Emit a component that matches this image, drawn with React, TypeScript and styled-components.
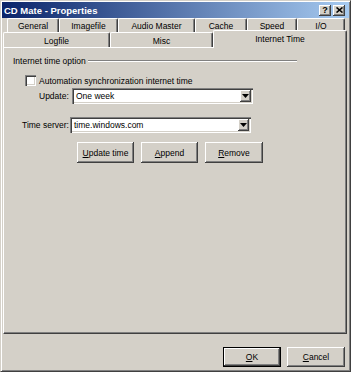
import { FC } from 'react';
import styled, { createGlobalStyle, css } from 'styled-components';

const GlobalStyle = createGlobalStyle`
  html, body {
    margin: 0;
    padding: 0;
    background: #d4d0c8;
  }
  body {
    font-family: "Liberation Sans", Arial, sans-serif;
    font-size: 8.5px;
    color: #000;
  }
`;

const raised = css`
  box-shadow: inset -1px -1px #404040, inset 1px 1px #fff, inset -2px -2px #808080, inset 2px 2px #d4d0c8;
`;

const sunken = css`
  box-shadow: inset 1px 1px #808080, inset 2px 2px #404040, inset -1px -1px #fff, inset -2px -2px #d4d0c8;
`;

const Window = styled.div`
  width: 351px;
  height: 372px;
  box-sizing: border-box;
  display: flex;
  flex-direction: column;
  background: #d4d0c8;
  border: 1px solid;
  border-color: #d4d0c8 #404040 #404040 #d4d0c8;
  box-shadow: inset 1px 1px #fff, inset -1px -1px #808080;
  padding: 1px;
`;

const TitleBar = styled.div`
  height: 16px;
  flex-shrink: 0;
  display: flex;
  align-items: center;
  padding: 0 4px 0 2px;
  background: linear-gradient(to right, #0a246a, #a6caf0);
`;

const Title = styled.span`
  color: #fff;
  font-weight: bold;
  font-size: 9.5px;
  white-space: nowrap;
`;

const TitleButtons = styled.div`
  margin-left: auto;
  display: flex;
  gap: 2px;
`;

const TitleButton = styled.div`
  width: 12px;
  height: 11px;
  box-sizing: border-box;
  background: #d4d0c8;
  ${raised};
  display: flex;
  align-items: center;
  justify-content: center;
  font-weight: bold;
  font-size: 9px;
  line-height: 1;
`;

const TabRow = styled.div<{ $h: number; $ml: number; $mr: number; $front?: boolean }>`
  display: flex;
  height: ${({ $h }) => $h}px;
  margin: 0 ${({ $mr }) => $mr}px 0 ${({ $ml }) => $ml}px;
  flex-shrink: 0;
  position: relative;
  z-index: ${({ $front }) => ($front ? 2 : 0)};
`;

const Tab = styled.div<{ $w: number; $active?: boolean }>`
  width: ${({ $w }) => $w}px;
  box-sizing: border-box;
  border-top: 1px solid #fff;
  border-left: 1px solid #fff;
  border-right: 1px solid #404040;
  border-radius: 2px 2px 0 0;
  box-shadow: inset -1px 0 #808080;
  background: #d4d0c8;
  display: flex;
  align-items: center;
  justify-content: center;
  white-space: nowrap;
  padding-top: 1px;
  ${({ $active }) =>
    $active &&
    css`
      margin: -2px 0 -1px;
      padding-bottom: 3px;
    `}
`;

const Panel = styled.div`
  flex: 1;
  margin: 0 2px 0 1px;
  border: 1px solid;
  border-color: #fff #404040 #404040 #fff;
  box-shadow: inset -1px -1px #808080;
  padding-top: 8px;
  display: flex;
  flex-direction: column;
`;

const GroupHeader = styled.div`
  display: flex;
  align-items: center;
  height: 10px;
  padding-left: 9px;
  margin-right: 49px;
  gap: 2px;
`;

const GroupLine = styled.div`
  flex: 1;
  border-top: 1px solid #808080;
  border-bottom: 1px solid #fff;
`;

const Row = styled.div<{ $pl: number; $mt: number; $h: number; $gap?: number }>`
  display: flex;
  align-items: center;
  padding-left: ${({ $pl }) => $pl}px;
  margin-top: ${({ $mt }) => $mt}px;
  height: ${({ $h }) => $h}px;
  gap: ${({ $gap }) => $gap ?? 0}px;
`;

const CheckBox = styled.div`
  width: 11px;
  height: 11px;
  box-sizing: border-box;
  background: #fff;
  ${sunken};
`;

const Label = styled.span<{ $w: number }>`
  width: ${({ $w }) => $w}px;
  white-space: nowrap;
`;

const Combo = styled.div<{ $w: number }>`
  width: ${({ $w }) => $w}px;
  height: 16px;
  box-sizing: border-box;
  padding: 2px;
  display: flex;
  background: #fff;
  ${sunken};
`;

const ComboText = styled.span`
  flex: 1;
  padding-left: 2px;
  display: flex;
  align-items: center;
`;

const ComboArrow = styled.div`
  width: 11px;
  box-sizing: border-box;
  background: #d4d0c8;
  ${raised};
  display: flex;
  align-items: center;
  justify-content: center;
`;

const Button = styled.button<{ $w: number; $default?: boolean }>`
  width: ${({ $w }) => $w}px;
  height: 100%;
  box-sizing: border-box;
  padding: 0;
  border: ${({ $default }) => ($default ? '1px solid #000' : 'none')};
  background: #d4d0c8;
  font: inherit;
  color: #000;
  ${raised};
`;

const U = styled.span`
  text-decoration: underline;
`;

const Footer = styled.div`
  flex-shrink: 0;
  height: 36px;
  box-sizing: border-box;
  padding: 13px 4px 3px 0;
  display: flex;
  justify-content: flex-end;
  gap: 6px;
`;

const Arrow: FC = () => (
  <svg width="7" height="4" viewBox="0 0 7 4">
    <polygon points="0,0 7,0 3.5,4" fill="#000" />
  </svg>
);

const ComboBox: FC<{ w: number; value: string }> = ({ w, value }) => (
  <Combo $w={w}>
    <ComboText>{value}</ComboText>
    <ComboArrow>
      <Arrow />
    </ComboArrow>
  </Combo>
);

const App: FC = () => {
  const topTabs: [string, number][] = [
    ['General', 52],
    ['Imagefile', 59],
    ['Audio Master', 77],
    ['Cache', 52],
    ['Speed', 50],
    ['I/O', 48],
  ];
  const frontTabs: [string, number][] = [
    ['Logfile', 107],
    ['Misc', 103],
    ['Internet Time', 134],
  ];

  return (
    <>
      <GlobalStyle />
      <Window>
        <TitleBar>
          <Title>CD Mate - Properties</Title>
          <TitleButtons>
            <TitleButton>?</TitleButton>
            <TitleButton>
              <svg width="7" height="6" viewBox="0 0 7 6">
                <path d="M0.5 0.5 L6.5 5.5 M6.5 0.5 L0.5 5.5" stroke="#000" strokeWidth="1.6" />
              </svg>
            </TitleButton>
          </TitleButtons>
        </TitleBar>

        <TabRow $h={14} $ml={5} $mr={4}>
          {topTabs.map(([name, w]) => (
            <Tab key={name} $w={w}>{name}</Tab>
          ))}
        </TabRow>
        <TabRow $h={15} $ml={1} $mr={2} $front>
          {frontTabs.map(([name, w]) => (
            <Tab key={name} $w={w} $active={name === 'Internet Time'}>{name}</Tab>
          ))}
        </TabRow>

        <Panel>
          <GroupHeader>
            <span>Internet time option</span>
            <GroupLine />
          </GroupHeader>
          <Row $pl={21} $mt={9} $h={11} $gap={3}>
            <CheckBox />
            <span>Automation synchronization internet time</span>
          </Row>
          <Row $pl={35} $mt={2} $h={16}>
            <Label $w={33}>Update:</Label>
            <ComboBox w={181} value="One week" />
          </Row>
          <Row $pl={18} $mt={13} $h={16}>
            <Label $w={48}>Time server:</Label>
            <ComboBox w={181} value="time.windows.com" />
          </Row>
          <Row $pl={73} $mt={9} $h={21} $gap={7}>
            <Button $w={57}><U>U</U>pdate time</Button>
            <Button $w={57}><U>A</U>ppend</Button>
            <Button $w={58}><U>R</U>emove</Button>
          </Row>
        </Panel>

        <Footer>
          <Button $w={58} $default><U>O</U>K</Button>
          <Button $w={58}><U>C</U>ancel</Button>
        </Footer>
      </Window>
    </>
  );
};

export default App;
